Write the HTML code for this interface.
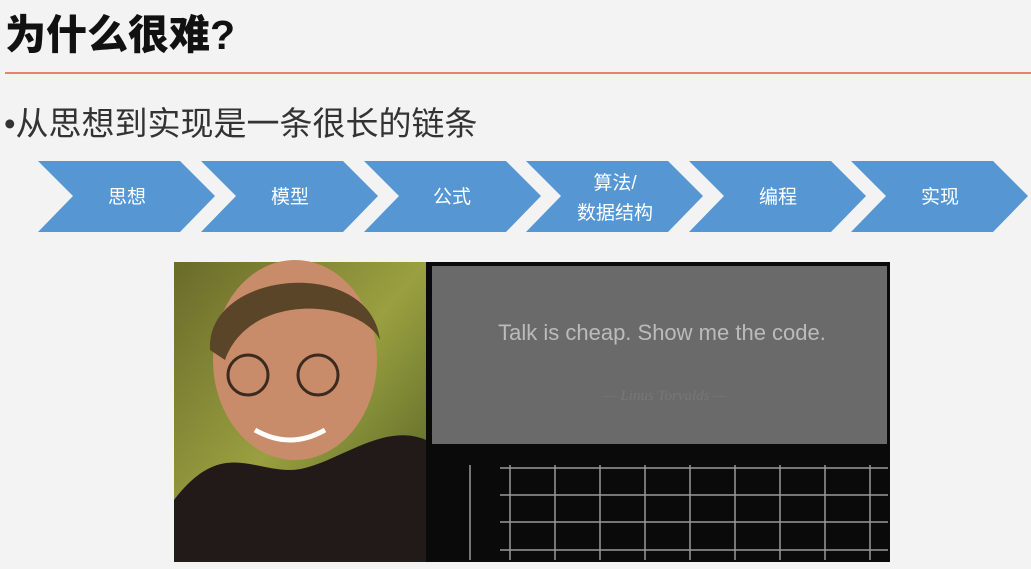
<!DOCTYPE html>
<html><head><meta charset="utf-8"><style>
body{margin:0;width:1031px;height:569px;background:#f3f3f3;overflow:hidden;position:relative;font-family:"Liberation Sans","Noto Sans CJK SC",sans-serif}
.t{position:absolute;left:5px;top:10px;font-size:41px;line-height:50px;font-weight:900;color:#111;letter-spacing:0px}
.line{position:absolute;left:5px;top:72px;width:1026px;height:2px;background:#e8836b}
.b{position:absolute;left:4px;top:102px;font-size:33px;line-height:44px;color:#333}
</style></head><body>
<div class="t">为什么很难?</div>
<div class="line"></div>
<div class="b">•从思想到实现是一条很长的链条</div>
<svg width="1031" height="569" style="position:absolute;left:0;top:0">
<g fill="#5596d3">
<polygon points="38,161 180,161 215,196 180,232 38,232 73,196"/>
<polygon points="201,161 343,161 378,196 343,232 201,232 236,196"/>
<polygon points="364,161 506,161 541,196 506,232 364,232 399,196"/>
<polygon points="526,161 668,161 703,196 668,232 526,232 561,196"/>
<polygon points="689,161 831,161 866,196 831,232 689,232 724,196"/>
<polygon points="851,161 993,161 1028,196 993,232 851,232 886,196"/>
</g>
<g fill="#fff" font-size="19" text-anchor="middle" font-family="Liberation Sans,Noto Sans CJK SC,sans-serif">
<text x="127" y="203">思想</text><text x="290" y="203">模型</text><text x="452" y="203">公式</text>
<text x="615" y="189">算法/</text><text x="615" y="219">数据结构</text>
<text x="778" y="203">编程</text><text x="940" y="203">实现</text>
</g>
<defs><linearGradient id="bg" x1="0" y1="0" x2="1" y2="1"><stop offset="0" stop-color="#6a6a2a"/><stop offset=".5" stop-color="#9aa040"/><stop offset="1" stop-color="#4a5a20"/></linearGradient></defs>
<rect x="174" y="262" width="252" height="300" fill="url(#bg)"/>
<ellipse cx="295" cy="360" rx="82" ry="100" fill="#c98c6a"/>
<path d="M210,350 C205,270 370,255 380,340 C360,300 250,290 225,360 Z" fill="#5a4528"/>
<path d="M174,562 L174,500 C220,440 250,470 290,470 C330,470 380,420 426,440 L426,562 Z" fill="#221a18"/>
<circle cx="248" cy="375" r="20" fill="none" stroke="#3a2a20" stroke-width="3"/>
<circle cx="318" cy="375" r="20" fill="none" stroke="#3a2a20" stroke-width="3"/>
<path d="M255,430 Q290,450 325,430" stroke="#fff" stroke-width="5" fill="none"/>
<rect x="426" y="262" width="464" height="300" fill="#0a0a0a"/>
<rect x="432" y="266" width="455" height="178" fill="#6a6a6a"/>
<text x="662" y="340" font-size="22" fill="#bbb" text-anchor="middle" font-family="Liberation Sans,sans-serif">Talk is cheap. Show me the code.</text>
<text x="665" y="400" font-size="15" fill="#777" font-style="italic" text-anchor="middle" font-family="Liberation Serif,serif">— Linus Torvalds —</text>
<g stroke="#999" stroke-width="1.5">
<line x1="500" y1="468" x2="888" y2="468"/><line x1="500" y1="495" x2="888" y2="495"/><line x1="500" y1="522" x2="888" y2="522"/><line x1="500" y1="550" x2="888" y2="550"/>
<line x1="510" y1="465" x2="510" y2="560"/><line x1="555" y1="465" x2="555" y2="560"/><line x1="600" y1="465" x2="600" y2="560"/><line x1="645" y1="465" x2="645" y2="560"/><line x1="690" y1="465" x2="690" y2="560"/><line x1="735" y1="465" x2="735" y2="560"/><line x1="780" y1="465" x2="780" y2="560"/><line x1="825" y1="465" x2="825" y2="560"/><line x1="870" y1="465" x2="870" y2="560"/>
<line x1="470" y1="465" x2="470" y2="560"/>
</g>
</svg>
</body></html>
